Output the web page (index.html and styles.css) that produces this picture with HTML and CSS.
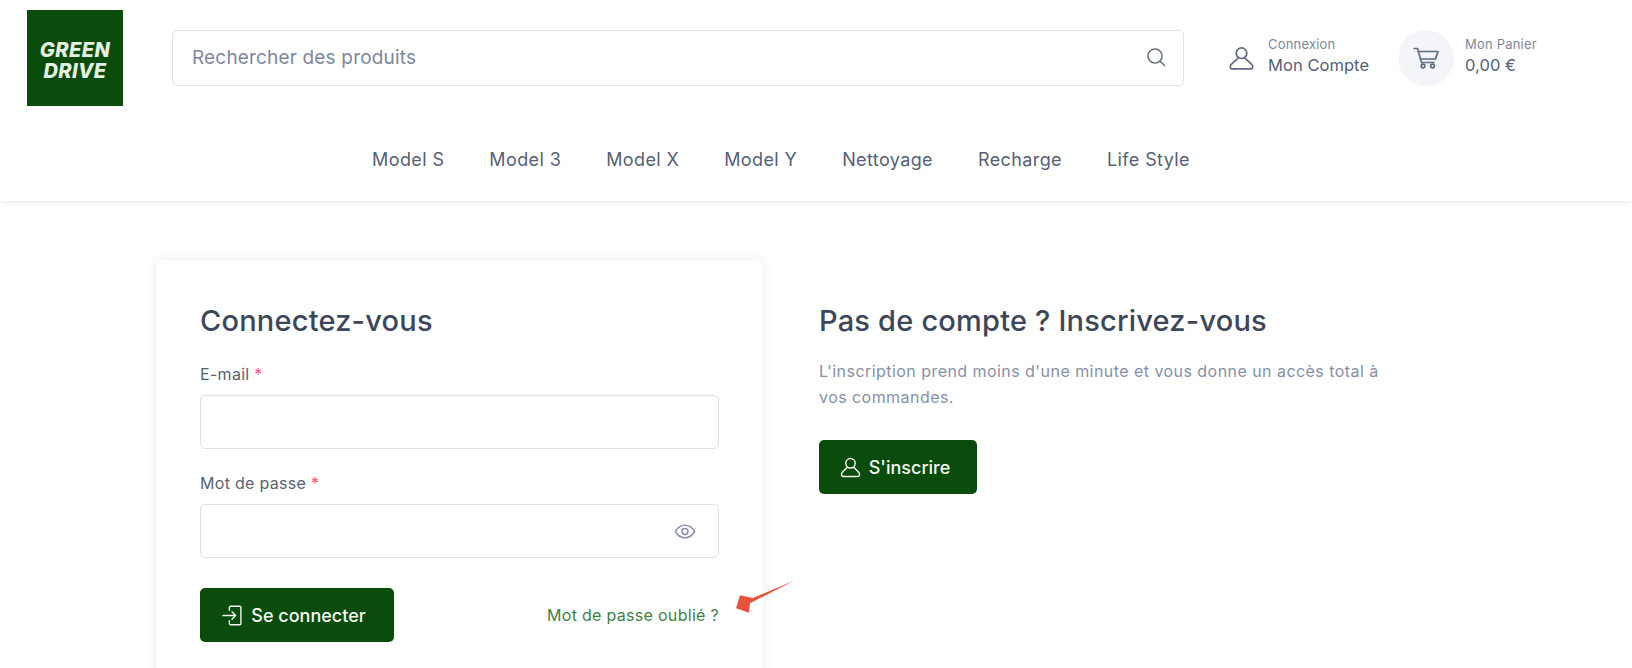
FILE: index.html
```html
<!DOCTYPE html>
<html lang="fr">
<head>
<meta charset="utf-8">
<title>Green Drive - Connexion</title>
<link rel="stylesheet" href="styles.css">
</head>
<body>
<header class="site-header">
  <div class="top-row">
    <a class="logo" href="#"><span>GREEN</span><span>DRIVE</span></a>
    <div class="search">
      <span class="search-text">Rechercher des produits</span>
      <svg class="search-icon" viewBox="0 0 20 20" fill="none" stroke="currentColor" stroke-width="1.600" stroke-linecap="round"><circle cx="9" cy="9" r="7"/><path d="M14.200 14.200 18.500 18.500"/></svg>
    </div>
    <a class="account" href="#">
      <svg class="account-icon" viewBox="0 0 26 24" fill="none" stroke="currentColor" stroke-width="1.800" stroke-linejoin="round"><circle cx="13" cy="6.500" r="5.500"/><path d="M9.500 11.500 2 18.500C.8 19.800 1 22.800 3 22.800H23C25 22.800 25.200 19.800 24 18.500L16.500 11.500"/></svg>
      <span class="meta"><small>Connexion</small><b>Mon Compte</b></span>
    </a>
    <a class="cart" href="#">
      <span class="cart-bubble">
        <svg viewBox="0 0 26 22" fill="none" stroke-width="1.700" stroke-linecap="round" stroke-linejoin="round"><path stroke="#66708a" d="M1 1.500H4.500L8.500 15.500H21"/><path stroke="#5c6b80" d="M5.500 4.500H25L22.500 12H7.500"/><circle stroke="#5c6b80" cx="10" cy="19" r="1.800"/><circle stroke="#5c6b80" cx="19.500" cy="19" r="1.800"/></svg>
      </span>
      <span class="meta"><small>Mon Panier</small><b>0,00 €</b></span>
    </a>
  </div>
  <nav class="main-nav">
    <a href="#">Model S</a>
    <a href="#">Model 3</a>
    <a href="#">Model X</a>
    <a href="#">Model Y</a>
    <a href="#">Nettoyage</a>
    <a href="#">Recharge</a>
    <a href="#">Life Style</a>
  </nav>
</header>

<main class="content">
  <section class="card">
    <h2>Connectez-vous</h2>
    <div class="field">
      <label>E-mail <em>*</em></label>
      <div class="input"></div>
    </div>
    <div class="field">
      <label>Mot de passe <em>*</em></label>
      <div class="input">
        <svg class="eye" viewBox="0 0 24 16" fill="none" stroke="currentColor" stroke-width="1.700"><path d="M1.500 8C4 3.500 7.800 1.200 12 1.200S20 3.500 22.500 8C20 12.500 16.200 14.800 12 14.800S4 12.500 1.500 8Z"/><circle cx="12" cy="8" r="3.200"/></svg>
      </div>
    </div>
    <div class="actions">
      <a class="btn btn-login" href="#">
        <svg viewBox="0 0 20 20" fill="none" stroke="currentColor" stroke-width="1.300" stroke-linecap="round" stroke-linejoin="round"><path d="M7 5V2.500C7 1.800 7.500 1.200 8.200 1.200H16.800C17.500 1.200 18 1.800 18 2.500V17.500C18 18.200 17.500 18.800 16.800 18.800H8.200C7.500 18.800 7 18.200 7 17.500V15"/><path d="M1 10H13M9.500 6.500 13 10 9.500 13.500"/></svg>
        Se connecter
      </a>
      <a class="forgot" href="#">Mot de passe oublié ?</a>
    </div>
  </section>
  <section class="signup">
    <h2>Pas de compte ? Inscrivez-vous</h2>
    <p>L'inscription prend moins d'une minute et vous donne un accès total à vos commandes.</p>
    <a class="btn btn-signup" href="#">
      <svg viewBox="0 0 20 20" fill="none" stroke="currentColor" stroke-width="1.400" stroke-linejoin="round"><circle cx="10" cy="6" r="4.500"/><path d="M7 9.800 2.200 14.500C1 15.800 1.300 18.500 3 18.500H17C18.700 18.500 19 15.800 17.800 14.500L13 9.800"/></svg>
      S'inscrire
    </a>
  </section>
</main>

<svg class="arrow" viewBox="0 0 60 34"><polygon points="0,28.300 4,15.300 17,18 58,.7 14,23.300 13,32.700" fill="#e5533c"/></svg>
</body>
</html>
```

FILE: styles.css
```css
* { box-sizing: border-box; }
html, body { margin: 0; height: 668px; overflow: hidden; }
body { background: #fff; font-family: Inter, "Liberation Sans", sans-serif; color: #4b566b; position: relative; }
a { color: inherit; text-decoration: none; }

.site-header { height: 201px; background: #fff; box-shadow: 0 1px 6px rgba(43, 52, 69, .12); padding: 10px 0 0 27px; }
.top-row { display: flex; align-items: center; height: 96px; }
.logo { width: 96px; height: 96px; padding-top: 5px; background: #0a4c0c; color: #e6f0e0; display: flex; flex-direction: column; align-items: center; justify-content: center; font-style: italic; font-weight: 800; font-size: 20px; letter-spacing: .4px; line-height: 21px; }
.search { margin-left: 49px; width: 1012px; height: 56px; border: 1px solid #dde3ec; border-radius: 5px; display: flex; align-items: center; justify-content: space-between; padding: 0 17px 0 19px; }
.search-text { font-size: 19px; letter-spacing: .17px; color: #7d879c; position: relative; top: -1px; }
.search-icon { width: 20px; height: 20px; margin-top: -2px; color: #69727f; }
.account { margin-left: 45px; display: flex; align-items: center; gap: 14px; }
.account-icon { width: 25px; height: 23px; color: #5f6b7d; }
.meta { display: flex; flex-direction: column; margin-top: -2px; }
.meta small { font-size: 13px; letter-spacing: .2px; line-height: 15px; margin-bottom: 1px; color: #7d879c; }
.meta b { font-size: 16.500px; letter-spacing: .05px; line-height: 24px; font-weight: 400; color: #566175; }
.cart { margin-left: 29px; display: flex; align-items: center; gap: 11px; }
.cart-bubble { width: 56px; height: 56px; border-radius: 50%; background: #f3f5f9; display: flex; align-items: center; justify-content: center; }
.cart-bubble svg { width: 26px; height: 22px; }

.main-nav { display: flex; justify-content: center; gap: 45px; padding: 42px 97px 0 0; font-size: 18px; letter-spacing: .39px; line-height: 24px; color: #566175; }

.content { display: flex; align-items: flex-start; padding: 59px 0 0 156px; }
.card { width: 607px; height: 480px; border-radius: 8px; background: #fff; box-shadow: 0 1px 12px rgba(43, 52, 69, .1); padding: 43px 44px 0; }
h2 { margin: 0; font-size: 29px; letter-spacing: .2px; line-height: 36px; font-weight: 500; color: #3e4759; }
.field { margin-top: 23px; }
.field + .field { margin-top: 22px; }
.field label { display: block; font-size: 16px; letter-spacing: .3px; line-height: 24px; color: #5a6272; margin-bottom: 9px; }
.field label em { font-style: normal; color: #f6547b; }
.input { height: 54px; border: 1px solid #dae1e7; border-radius: 5px; display: flex; align-items: center; justify-content: flex-end; padding-right: 22px; }
.eye { width: 22px; height: 15px; color: #8a93a8; }
.actions { margin-top: 30px; display: flex; align-items: center; justify-content: space-between; }
.btn { display: inline-flex; align-items: center; justify-content: center; gap: 8px; height: 54px; padding-right: 6px; background: #0a4c0c; color: #f6f8f4; border-radius: 5px; font-size: 18px; font-weight: 500; }
.btn svg { width: 21px; height: 21px; }
.btn-login { width: 194px; }
.btn-signup { width: 158px; margin-top: 30px; }
.forgot { font-size: 16px; letter-spacing: .3px; color: #3f7f47; }

.signup { width: 565px; margin-left: 56px; padding-top: 43px; }
.signup p { margin: 19px 0 0; font-size: 16px; letter-spacing: .45px; line-height: 26px; color: #8790a8; }

.arrow { position: absolute; left: 736px; top: 580px; width: 60px; height: 34px; }
```
